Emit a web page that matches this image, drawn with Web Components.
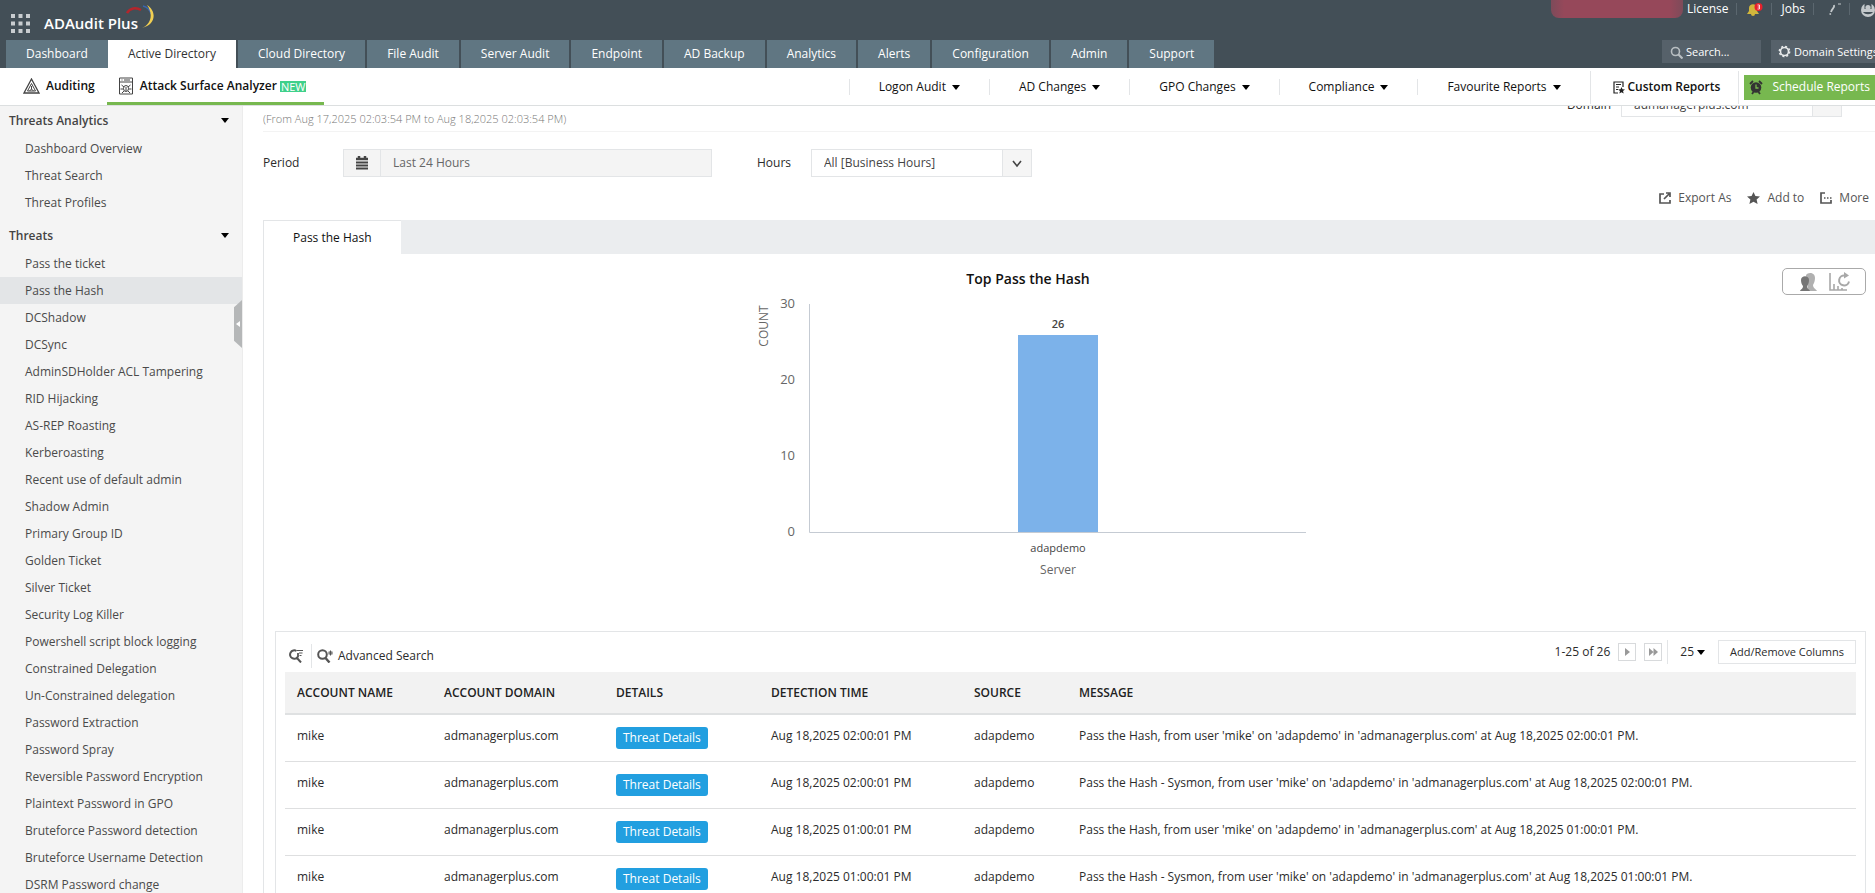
<!DOCTYPE html>
<html lang="en">
<head>
<meta charset="utf-8">
<title>ADAudit Plus - Pass the Hash</title>
<style>
    :root {
        --header: #434f57;
        --tab: #607682;
        --green: #77b84f;
        --blue: #229fe0;
        --line: #e3e5e7;
        --text: #2b2b2b;
        --muted: #555;
    }
    html, body {
        height: 100%;
        margin: 0;
    }
    body {
        display: flex;
        flex-direction: column;
        overflow: hidden;
        background: #fff;
        color: var(--text);
        font: 12px/18px "Open Sans", "Noto Sans", sans-serif;
    }
    .workspace {
        flex: 1;
        min-height: 0;
        display: flex;
    }
    .report {
        flex: 1;
        min-width: 0;
        overflow: hidden;
        padding-left: 20px;
    }
</style>
</head>
<body>
    <app-header></app-header>
    <sub-nav></sub-nav>
    <div class="workspace">
        <side-menu>
            <menu-group label="Threats Analytics" items="Dashboard Overview|Threat Search|Threat Profiles"></menu-group>
            <menu-group label="Threats" current="Pass the Hash" items="Pass the ticket|Pass the Hash|DCShadow|DCSync|AdminSDHolder ACL Tampering|RID Hijacking|AS-REP Roasting|Kerberoasting|Recent use of default admin|Shadow Admin|Primary Group ID|Golden Ticket|Silver Ticket|Security Log Killer|Powershell script block logging|Constrained Delegation|Un-Constrained delegation|Password Extraction|Password Spray|Reversible Password Encryption|Plaintext Password in GPO|Bruteforce Password detection|Bruteforce Username Detection|DSRM Password change"></menu-group>
        </side-menu>
        <main class="report">
            <report-filters></report-filters>
            <report-panel label="Pass the Hash">
                <bar-chart slot="chart" title-text="Top Pass the Hash" category="adapdemo" value="26"></bar-chart>
                <event-table></event-table>
            </report-panel>
        </main>
    </div>

<script>
class AppHeader extends HTMLElement {
    constructor() {
        super();
        this.attachShadow({ mode: "open" });
        const tabs = ["Dashboard", "Active Directory", "Cloud Directory", "File Audit", "Server Audit", "Endpoint",
            "AD Backup", "Analytics", "Alerts", "Configuration", "Admin", "Support"];

        this.shadowRoot.innerHTML = `
        <style>
            :host {
                display: block;
                background: var(--header);
                color: #fff;
            }
            .row {
                display: flex;
                justify-content: space-between;
            }
            .brand {
                display: flex;
                height: 40px;
                padding-left: 11px;
            }
            .apps {
                margin-top: 14px;
                width: 20px;
                height: 20px;
            }
            .name {
                margin: 13px 0 0 13px;
                font-size: 15px;
                line-height: 20px;
                font-weight: 600;
            }
            .swoosh {
                margin: 4px 0 0 -12px;
                width: 30px;
                height: 26px;
            }
            .account {
                display: flex;
                height: 18px;
                line-height: 18px;
                margin-right: -1px;
            }
            .account a {
                color: #fff;
                text-decoration: none;
                font-weight: 500;
            }
            .account > .cell {
                padding: 0 9px;
            }
            .account > .cell:not(:last-child) {
                background: linear-gradient(#5b676f, #5b676f) right center / 1px 12px no-repeat;
            }
            .account > .cell:last-child {
                padding-right: 0;
            }
            .user-name {
                width: 132px;
                background: linear-gradient(90deg, #7d4b5a, #96485a 10%, #96485a 90%, #7d4b5a);
                border-radius: 0 0 8px 8px;
            }
            .account > .license {
                padding-left: 4px;
            }
            svg {
                display: block;
            }
            nav {
                display: flex;
                gap: 2px;
                padding-left: 6px;
            }
            nav a {
                padding: 0 20px;
                line-height: 28px;
                background: var(--tab);
                color: #fff;
                text-decoration: none;
            }
            /* the active tab joins the one before it */
            nav a.active {
                margin-left: -2px;
                background: #fff;
                color: #333;
            }
            .tools {
                display: flex;
                gap: 10px;
                margin-right: -12px;
            }
            .tools > * {
                display: flex;
                align-items: center;
                height: 23px;
                box-sizing: border-box;
                background: #56616a;
                border: 0;
                color: #fff;
                font: 11px/18px "Open Sans", "Noto Sans", sans-serif;
                white-space: nowrap;
            }
            .tools label {
                width: 99px;
                padding-left: 8px;
                gap: 3px;
            }
            .tools input {
                width: 74px;
                padding: 0;
                border: 0;
                background: none;
                font: inherit;
                color: #fff;
            }
            .tools input::placeholder {
                color: #fff;
                opacity: 1;
            }
            .tools button {
                width: 116px;
                padding: 0 0 0 7px;
                gap: 3px;
                font-weight: 500;
            }
        </style>
        <div class="row">
            <div class="brand">
                <svg class="apps" viewBox="0 0 20 20" fill="#c9cdd0">
                    <path d="M0 0h4v4H0zM7.500 0h4v4h-4zM15 0h4v4h-4zM0 7.500h4v4H0zM7.500 7.500h4v4h-4zM15 7.500h4v4h-4zM0 15h4v4H0zM7.500 15h4v4h-4zM15 15h4v4h-4z"/>
                </svg>
                <span class="name">ADAudit Plus</span>
                <svg class="swoosh" viewBox="0 0 30 26" fill="none">
                    <path d="M1 9C4 4 10 3 15 6" stroke="#b3262c" stroke-width="2.500"/>
                    <path d="M17 2c4 1 7 4 8 8" stroke="#3c66b0" stroke-width="1.500"/>
                    <path d="M21 1c10 6 9 20-5 23 10-4 11-15 5-23z" fill="#f1cf52"/>
                </svg>
            </div>
            <div class="account">
                <span class="user-name"></span>
                <span class="cell license"><a href="#">License</a></span>
                <span class="cell">
                    <svg width="17" height="18" viewBox="0 0 17 18">
                        <path d="M1 14h12l-2-3V8c0-5-8-5-8 0v3zM5 14a2 2 0 0 0 4 0z" fill="#d1b63c"/>
                        <circle cx="12.500" cy="7" r="4" fill="#e8202c"/>
                        <path d="M11.500 5h2v4h-2M11.700 7h1.800" stroke="#fff" stroke-width=".8" fill="none"/>
                    </svg>
                </span>
                <span class="cell"><a href="#">Jobs</a></span>
                <span class="cell">
                    <svg width="18" height="18" viewBox="0 0 18 18" fill="none" stroke="#c3c8cb">
                        <path d="M11 5c1 3-2 3-3 7" stroke-width="1.800"/>
                        <path d="M6.500 14h1.600" stroke-width="1.600"/>
                        <path d="M15 4h3"/>
                    </svg>
                </span>
                <span class="cell">
                    <svg width="17" height="18" viewBox="0 0 17 18">
                        <circle cx="9" cy="10" r="7" fill="#c3c8cb"/>
                        <path d="M5.500 3h7v6h-7zM4 12c2 3 8 3 10 0" fill="#434f57"/>
                        <circle cx="9" cy="7.500" r="2.600" fill="#c3c8cb"/>
                    </svg>
                </span>
            </div>
        </div>
        <div class="row">
            <nav>${tabs.map(tab => `<a href="#"${tab === "Active Directory" ? ' class="active"' : ""}>${tab}</a>`).join("")}</nav>
            <div class="tools">
                <label>
                    <svg width="13" height="14" viewBox="0 0 13 14" fill="none" stroke="#b8bec2">
                        <circle cx="5.500" cy="6.500" r="4" stroke-width="1.600"/>
                        <path d="M8.500 9.500l4 4" stroke-width="2.200"/>
                    </svg>
                    <input type="text" placeholder="Search..." aria-label="Search">
                </label>
                <button type="button">
                    <svg width="13" height="13" viewBox="0 0 13 13" fill="none" stroke="#e8eaeb">
                        <circle cx="6.500" cy="6.500" r="4" stroke-width="1.600"/>
                        <circle cx="6.500" cy="6.500" r="5.200" stroke-width="1.400" stroke-dasharray="2.040 2.040"/>
                    </svg>
                    Domain Settings
                </button>
            </div>
        </div>
        `;
    }
}

class SubNav extends HTMLElement {
    constructor() {
        super();
        this.attachShadow({ mode: "open" });
        const menus = ["Logon Audit", "AD Changes", "GPO Changes", "Compliance", "Favourite Reports"];

        this.shadowRoot.innerHTML = `
        <style>
            :host {
                display: flex;
                justify-content: space-between;
                height: 37px;
                border-bottom: 1px solid #dcdfe0;
                color: #111;
                white-space: nowrap;
            }
            a {
                color: inherit;
                text-decoration: none;
            }
            .modules, .menus {
                display: flex;
            }
            .modules a {
                display: flex;
                align-items: center;
                gap: 6px;
                padding: 2px 12px 0;
                font-weight: 600;
                border-bottom: 3px solid transparent;
            }
            .modules a:first-child {
                padding-left: 23px;
            }
            .modules a.active {
                padding-right: 18px;
                gap: 7px;
                border-color: var(--green);
            }
            .new {
                margin-left: -4px;
                padding: 0 1px;
                background: #3fd08a;
                color: #fff;
                font-size: 11px;
                line-height: 11px;
                font-weight: 500;
            }
            .menus {
                align-items: center;
                padding-top: 1px;
            }
            .menus button {
                display: flex;
                align-items: center;
                gap: 6px;
                padding: 0 29px;
                border: 0;
                border-left: 1px solid var(--line);
                background: none;
                font: inherit;
                line-height: 16px;
                color: inherit;
            }
            .menus button::after {
                content: "";
                border: 4px solid transparent;
                border-top: 5px solid #000;
                border-bottom: 0;
            }
            .menus .custom {
                display: flex;
                align-items: center;
                gap: 3px;
                height: 33px;
                padding: 0 18px 0 22px;
                border: 1px solid var(--line);
                border-width: 0 1px;
                font-weight: 600;
            }
            .menus .schedule {
                display: flex;
                align-items: center;
                gap: 9px;
                height: 25px;
                margin-left: 5px;
                padding: 0 5px;
                background: var(--green);
                color: #fff;
            }
        </style>
        <div class="modules">
            <a href="#">
                <svg width="17" height="16" viewBox="0 0 17 16" fill="none" stroke="#444">
                    <path d="M8.500 1L16 15H1z" stroke-width="1.300"/>
                    <path d="M8.500 5.500l4 7.500h-8zM8.500 8v3M6.500 13l2-2 2 2"/>
                </svg>
                Auditing
            </a>
            <a href="#" class="active">
                <svg width="14" height="18" viewBox="0 0 14 18" fill="none" stroke="#444">
                    <path d="M.5 1h13v16H.5zM.5 5h13M2.500 3h1M5 3h6"/>
                    <ellipse cx="7" cy="11.500" rx="2.500" ry="3"/>
                    <path d="M7 10v4M2.500 8l2.500 2M11.500 8L9 10M1.500 12h3M9.500 12h3M3 16l2-2M11 16l-2-2"/>
                </svg>
                Attack Surface Analyzer
                <span class="new">NEW</span>
            </a>
        </div>
        <div class="menus">
            ${menus.map(menu => `<button type="button">${menu}</button>`).join("")}
            <a href="#" class="custom">
                <svg width="12" height="13" viewBox="0 0 12 13" fill="none" stroke="#222">
                    <path d="M5 12H1V1h9v5" stroke-width="1.200"/>
                    <path d="M3 3.500h5M3 6h3M3 8.500h2"/>
                    <path d="M8.500 6l1 2.200 2.500.2-2 1.600.7 2.500-2.200-1.300-2.200 1.300.7-2.500-2-1.600 2.500-.2z" fill="#222" stroke="none"/>
                </svg>
                Custom Reports
            </a>
            <a href="#" class="schedule">
                <svg width="14" height="15" viewBox="0 0 14 15">
                    <circle cx="7" cy="7.500" r="5.300" fill="#333"/>
                    <path d="M1 4l3-3M13 4l-3-3M3 14l1.500-2M11 14l-1.500-2" stroke="#333" stroke-width="1.800"/>
                    <path d="M7 4.500V8h2.500" stroke="#77b84f" stroke-width="1.300" fill="none"/>
                </svg>
                Schedule Reports
            </a>
        </div>
        `;
    }
}

class SideMenu extends HTMLElement {
    constructor() {
        super();
        this.attachShadow({ mode: "open" });

        this.shadowRoot.innerHTML = `
        <style>
            :host {
                position: relative;
                flex: 0 0 242px;
                overflow: hidden;
                background: #f4f4f4;
                border-right: 1px solid #ececec;
            }
            /* collapse handle lies over the menu's right edge */
            .handle {
                position: absolute;
                right: 0;
                top: 194px;
                width: 8px;
                height: 48px;
                padding: 0;
                border: 0;
                background: #b5b7b8;
                clip-path: polygon(100% 0, 100% 100%, 0 85%, 0 15%);
            }
            .handle svg {
                display: block;
                margin: auto;
            }
        </style>
        <slot></slot>
        <button class="handle" type="button" aria-label="Collapse menu">
            <svg width="4" height="6" viewBox="0 0 4 6"><path d="M4 0v6L0 3z" fill="#fff"/></svg>
        </button>
        `;
    }
}

class MenuGroup extends HTMLElement {
    constructor() {
        super();
        this.attachShadow({ mode: "open" });
    }

    connectedCallback() {
        const current = this.getAttribute("current");
        const items = this.getAttribute("items").split("|");

        this.shadowRoot.innerHTML = `
        <style>
            :host {
                display: block;
            }
            h2 {
                display: flex;
                align-items: center;
                justify-content: space-between;
                height: 29px;
                margin: 0;
                padding: 0 13px 0 9px;
                font-size: 12px;
                font-weight: 600;
                color: #444;
            }
            h2::after {
                content: "";
                border: 4px solid transparent;
                border-top: 5px solid #000;
                border-bottom: 0;
            }
            ul {
                margin: 0 0 5px;
                padding: 0;
                list-style: none;
            }
            li {
                padding-left: 25px;
                line-height: 27px;
            }
            li.current {
                background: var(--line);
            }
            a {
                color: #4a4a4a;
                text-decoration: none;
            }
        </style>
        <h2>${this.getAttribute("label")}</h2>
        <ul>${items.map(item => `<li${item === current ? ' class="current"' : ""}><a href="#">${item}</a></li>`).join("")}</ul>
        `;
    }
}

class ReportFilters extends HTMLElement {
    constructor() {
        super();
        this.attachShadow({ mode: "open" });

        this.shadowRoot.innerHTML = `
        <style>
            :host {
                display: block;
            }
            .range {
                display: flex;
                align-items: flex-start;
                justify-content: space-between;
                height: 25px;
                overflow: hidden;
                border-bottom: 1px solid #f3f3f3;
            }
            .range p {
                margin: 4px 0 0;
                font-size: 11px;
                font-weight: 300;
                color: #777;
            }
            /* scrolled partly under the page header */
            .domain {
                margin: -17px 33px 0 0;
                gap: 10px;
            }
            .domain .select {
                width: 221px;
            }
            .domain label, .domain select {
                padding-top: 4px;
            }
            .field {
                display: flex;
                align-items: center;
            }
            .filters {
                display: flex;
                padding-top: 17px;
            }
            .box, .select {
                display: flex;
                box-sizing: border-box;
                height: 28px;
                border: 1px solid var(--line);
            }
            .box {
                width: 369px;
                background: #f4f4f4;
            }
            .box svg {
                padding: 6px 11px;
                border-right: 1px solid var(--line);
            }
            input {
                flex: 1;
                min-width: 0;
                padding: 0 12px;
                border: 0;
                background: none;
                font: inherit;
                color: #666;
            }
            select {
                flex: 1;
                min-width: 0;
                padding: 0 12px;
                border: 0;
                background: #fff;
                appearance: none;
                font: inherit;
                color: #444;
            }
            .select svg {
                padding: 8px;
                border-left: 1px solid var(--line);
                background: #f5f5f5;
            }
            .period label {
                width: 80px;
            }
            .hours {
                padding-left: 45px;
            }
            .hours label {
                width: 54px;
            }
            .hours .select {
                width: 221px;
            }
            .actions {
                display: flex;
                justify-content: flex-end;
                gap: 16px;
                padding: 12px 6px 13px;
            }
            .actions a {
                display: flex;
                align-items: center;
                gap: 7px;
                color: var(--muted);
                text-decoration: none;
            }
        </style>
        <div class="range">
            <p>(From Aug 17,2025 02:03:54 PM to Aug 18,2025 02:03:54 PM)</p>
            <div class="field domain">
                <label for="domain">Domain</label>
                <div class="select">
                    <select id="domain"><option>admanagerplus.com</option></select>
                    <svg width="12" height="10"></svg>
                </div>
            </div>
        </div>
        <div class="filters">
            <div class="field period">
                <label for="period">Period</label>
                <div class="box">
                    <svg width="14" height="14" viewBox="0 0 14 14" stroke="#444" fill="none">
                        <path d="M1 3h12M4 0v3M10 0v3" stroke-width="2.500"/>
                        <path d="M1 6.500h12M1 9.500h12M1 12.500h12" stroke-width="2"/>
                    </svg>
                    <input id="period" type="text" value="Last 24 Hours" readonly>
                </div>
            </div>
            <div class="field hours">
                <label for="hours">Hours</label>
                <div class="select">
                    <select id="hours"><option>All [Business Hours]</option></select>
                    <svg width="12" height="10" viewBox="0 0 12 10"><path d="M2 3l4 5 4-5" fill="none" stroke="#444" stroke-width="1.600"/></svg>
                </div>
            </div>
        </div>
        <div class="actions">
            <a href="#">
                <svg width="12" height="12" viewBox="0 0 12 12" fill="none" stroke="#555" stroke-width="1.700">
                    <path d="M5 2H1v9h10V8M5 7l5-5M7 1h4v4"/>
                </svg>
                Export As
            </a>
            <a href="#">
                <svg width="13" height="12" viewBox="0 0 13 12"><path d="M6.500 0l1.900 4 4.600.5-3.400 3 1 4.500-4.100-2.300L2.400 12l1-4.500L0 4.500 4.600 4z" fill="#555"/></svg>
                Add to
            </a>
            <a href="#">
                <svg width="12" height="12" viewBox="0 0 12 12" fill="none" stroke="#555" stroke-width="1.700">
                    <path d="M5 1H1v10h10V8M4 6h1.500M7 6h1.500M10 6h1.500"/>
                </svg>
                More
            </a>
        </div>
        `;
    }
}

class ReportPanel extends HTMLElement {
    constructor() {
        super();
        this.attachShadow({ mode: "open" });

        this.shadowRoot.innerHTML = `
        <style>
            :host {
                display: block;
                border-left: 1px solid var(--line);
            }
            .tabs {
                display: flex;
                height: 34px;
                background: #ebedef;
            }
            .tabs button {
                padding: 0 29px;
                border: 0;
                border-top: 1px solid var(--line);
                background: #fff;
                font: inherit;
                color: #111;
            }
            .chart {
                display: flex;
                align-items: flex-start;
                padding: 14px 9px 29px 0;
            }
            ::slotted(bar-chart) {
                flex: 1;
            }
            .view {
                display: flex;
                box-sizing: border-box;
                width: 84px;
                height: 27px;
                padding: 0 9px;
                border: 1px solid #aaa;
                border-radius: 5px;
            }
            .view button {
                flex: 1;
                padding: 3px 0 0;
                border: 0;
                background: none;
            }
        </style>
        <div class="tabs" role="tablist"><button type="button" role="tab" aria-selected="true"></button></div>
        <div class="chart">
            <slot name="chart"></slot>
            <div class="view">
                <button type="button" aria-label="Users">
                    <svg width="19" height="20" viewBox="0 0 19 20">
                        <path d="M7 3c2-3 9-3 9 3 0 3-1 5-2 7 0 3 3 4 4 6H9z" fill="#b0b0b0"/>
                        <path d="M2 8c0-5 8-5 8 0 0 3-1 5-2 6 0 3 2 3 3 5H1c1-2 3-2 3-5-1-1-2-3-2-6z" fill="#757575"/>
                    </svg>
                </button>
                <button type="button" aria-label="Refresh chart">
                    <svg width="22" height="20" viewBox="0 0 22 20" fill="none" stroke="#a8a8a8" stroke-width="1.600">
                        <path d="M1 1v17h17M5 18v-6M9 18v-4M13 18v-2"/>
                        <path d="M16 3.500a5 5 0 1 0 4 6" stroke-width="2"/>
                        <path d="M15 0l5 3.500-5 3z" fill="#a8a8a8" stroke="none"/>
                    </svg>
                </button>
            </div>
        </div>
        <slot></slot>
        `;
    }

    connectedCallback() {
        this.shadowRoot.querySelector(".tabs button").textContent = this.getAttribute("label");
    }
}

class BarChart extends HTMLElement {
    constructor() {
        super();
        this.attachShadow({ mode: "open" });
    }

    connectedCallback() {
        const value = Number(this.getAttribute("value"));
        const base = 264;
        const scale = 228 / 30;
        const top = Math.ceil(base - value * scale);
        const ticks = [30, 20, 10, 0];

        this.shadowRoot.innerHTML = `
        <style>
            :host {
                display: flex;
                justify-content: center;
            }
            text {
                font-size: 13px;
                fill: #666;
            }
            .title {
                font-size: 14px;
                font-weight: 600;
                fill: #111;
            }
            .axis {
                font-size: 12px;
            }
            .category {
                font-size: 11px;
                fill: #444;
            }
            .value {
                font-size: 11px;
                font-weight: 600;
                fill: #444;
            }
        </style>
        <svg width="592" height="334" viewBox="0 0 592 334">
            <text class="title" x="301" y="16" text-anchor="middle">${this.getAttribute("title-text")}</text>
            <text class="axis" transform="translate(41 58) rotate(-90)" text-anchor="middle">COUNT</text>
            ${ticks.map(tick => `<text x="68" y="${base + 4 - tick * scale}" text-anchor="end">${tick}</text>`).join("")}
            <path d="M82.500 36v228.500H579" fill="none" stroke="#c5cbd3"/>
            <rect x="291" y="${top}" width="80" height="${base - top}" fill="#7cb2ea"/>
            <text class="value" x="331" y="${top - 7}" text-anchor="middle">${value}</text>
            <text class="category" x="331" y="284" text-anchor="middle">${this.getAttribute("category")}</text>
            <text class="axis" x="331" y="306" text-anchor="middle">Server</text>
        </svg>
        `;
    }
}

class EventTable extends HTMLElement {
    constructor() {
        super();
        this.attachShadow({ mode: "open" });
        const events = [
            ["Aug 18,2025 02:00:01 PM", ""],
            ["Aug 18,2025 02:00:01 PM", " - Sysmon"],
            ["Aug 18,2025 01:00:01 PM", ""],
            ["Aug 18,2025 01:00:01 PM", " - Sysmon"]
        ];

        this.shadowRoot.innerHTML = `
        <style>
            :host {
                display: block;
                margin: 0 9px 0 11px;
                padding: 7px 9px 0;
                border: 1px solid var(--line);
            }
            .toolbar {
                display: flex;
                justify-content: space-between;
                height: 33px;
            }
            .search, .paging {
                display: flex;
                align-items: center;
            }
            .search {
                padding: 4px 0 4px 4px;
            }
            button {
                display: flex;
                align-items: center;
                border: 0;
                padding: 0;
                background: none;
                font: inherit;
                color: inherit;
            }
            .advanced {
                height: 24px;
                margin-left: 8px;
                padding-left: 5px;
                gap: 4px;
                border-left: 1px solid var(--line);
            }
            .paging {
                align-self: flex-start;
                height: 26px;
            }
            .page {
                justify-content: center;
                box-sizing: border-box;
                width: 18px;
                height: 18px;
                margin-left: 8px;
                border: 1px solid #d8dadc;
            }
            .size {
                height: 24px;
                gap: 3px;
                margin-left: 5px;
                padding: 0 13px 0 12px;
                border-left: 1px solid var(--line);
            }
            .size::after {
                content: "";
                border: 4px solid transparent;
                border-top: 5px solid #000;
                border-bottom: 0;
            }
            .columns {
                box-sizing: border-box;
                height: 24px;
                padding: 0 11px;
                border: 1px solid var(--line);
                font-size: 11px;
            }
            table {
                width: 100%;
                border-collapse: collapse;
                table-layout: fixed;
            }
            th, td {
                padding: 0 12px;
                text-align: left;
                white-space: nowrap;
            }
            th {
                height: 41px;
                background: #f2f2f2;
                border-bottom: 2px solid #dfe1e2;
                font-weight: 600;
                color: #222;
            }
            td {
                height: 34px;
                padding-top: 12px;
                border-bottom: 1px solid #dedfe0;
                vertical-align: top;
            }
            .name { width: 123px; }
            .domain { width: 148px; }
            .details { width: 131px; }
            .time { width: 179px; }
            .source { width: 81px; }
            .threat {
                height: 22px;
                padding: 0 7px;
                border-radius: 3px;
                background: var(--blue);
                color: #fff;
            }
        </style>
        <div class="toolbar">
            <div class="search">
                <button type="button" aria-label="Search">
                    <svg width="14" height="14" viewBox="0 0 14 14" fill="none" stroke="#555">
                        <path d="M7.500 2A4.200 4.200 0 1 0 9 7.500M8 9l4 4.500" stroke-width="2"/>
                        <path d="M9 4v4" stroke-width="1.800"/>
                        <path d="M8 1.500h6M10 4h3.500M10.500 6.500h2"/>
                    </svg>
                </button>
                <button type="button" class="advanced">
                    <svg width="17" height="14" viewBox="0 0 17 14" fill="none" stroke="#555">
                        <circle cx="5.500" cy="5.500" r="4.300" stroke-width="2"/>
                        <path d="M8.500 9l4 4.500" stroke-width="2.400"/>
                        <path d="M13.500 1.500v5M11 4h5M12 2.300l3 3.400M15 2.300l-3 3.400"/>
                    </svg>
                    Advanced Search
                </button>
            </div>
            <div class="paging">
                1-25 of 26
                <button type="button" class="page" aria-label="Next page">
                    <svg width="5" height="8" viewBox="0 0 5 8"><path d="M0 0l5 4-5 4z" fill="#999"/></svg>
                </button>
                <button type="button" class="page" aria-label="Last page">
                    <svg width="9" height="8" viewBox="0 0 9 8"><path d="M0 0l4.500 4L0 8zM4.500 0L9 4 4.500 8z" fill="#999"/></svg>
                </button>
                <button type="button" class="size">25</button>
                <button type="button" class="columns">Add/Remove Columns</button>
            </div>
        </div>
        <table>
            <thead>
                <tr>
                    <th class="name">ACCOUNT NAME</th>
                    <th class="domain">ACCOUNT DOMAIN</th>
                    <th class="details">DETAILS</th>
                    <th class="time">DETECTION TIME</th>
                    <th class="source">SOURCE</th>
                    <th>MESSAGE</th>
                </tr>
            </thead>
            <tbody>
                ${events.map(([time, kind]) => `
                <tr>
                    <td>mike</td>
                    <td>admanagerplus.com</td>
                    <td><button type="button" class="threat">Threat Details</button></td>
                    <td>${time}</td>
                    <td>adapdemo</td>
                    <td>Pass the Hash${kind}, from user 'mike' on 'adapdemo' in 'admanagerplus.com' at ${time}.</td>
                </tr>`).join("")}
            </tbody>
        </table>
        `;
    }
}

customElements.define("app-header", AppHeader);
customElements.define("sub-nav", SubNav);
customElements.define("side-menu", SideMenu);
customElements.define("menu-group", MenuGroup);
customElements.define("report-filters", ReportFilters);
customElements.define("report-panel", ReportPanel);
customElements.define("bar-chart", BarChart);
customElements.define("event-table", EventTable);
</script>
</body>
</html>
